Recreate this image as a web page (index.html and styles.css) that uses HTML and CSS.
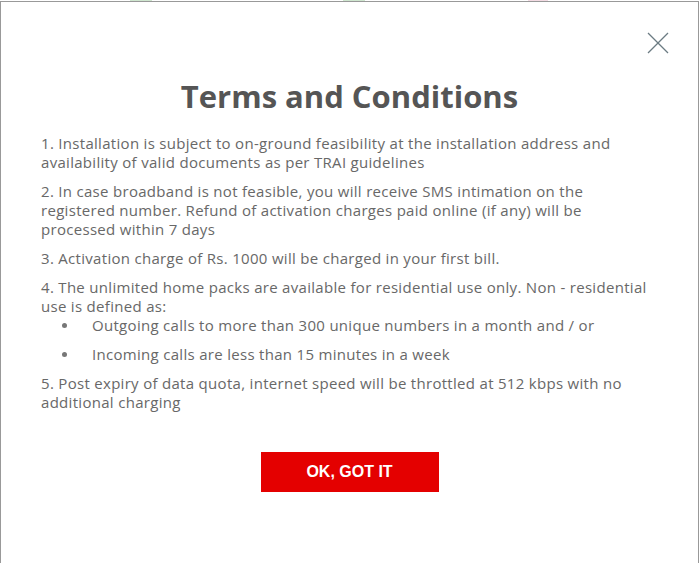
FILE: index.html
```html
<!DOCTYPE html>
<html>
<head>
    <meta charset="utf-8">
    <title>Terms and Conditions</title>
    <link rel="stylesheet" href="styles.css">
</head>
<body>

<div class="backdrop">
    <span class="peek peek-green peek-1"></span>
    <span class="peek peek-green peek-2"></span>
    <span class="peek peek-pink peek-3"></span>
</div>

<div class="modal">
    <div class="close-row">
        <button class="close" aria-label="Close">
            <svg width="22" height="22" viewBox="0 0 22 22">
                <line x1="1" y1="1" x2="21" y2="21" stroke="#6b7b83" stroke-width="1.2"/>
                <line x1="21" y1="1" x2="1" y2="21" stroke="#6b7b83" stroke-width="1.2"/>
            </svg>
        </button>
    </div>
    <h2>Terms and Conditions</h2>
    <div class="terms">
        <div class="term">1. Installation is subject to on-ground feasibility at the installation address and availability of valid documents as per TRAI guidelines</div>
        <div class="term">2. In case broadband is not feasible, you will receive SMS intimation on the registered number. Refund of activation charges paid online (if any) will be processed within 7 days</div>
        <div class="term">3. Activation charge of Rs. 1000 will be charged in your first bill.</div>
        <div class="term">
            4. The unlimited home packs are available for residential use only. Non - residential use is defined as:
            <ul>
                <li>Outgoing calls to more than 300 unique numbers in a month and / or</li>
                <li>Incoming calls are less than 15 minutes in a week</li>
            </ul>
        </div>
        <div class="term">5. Post expiry of data quota, internet speed will be throttled at 512 kbps with no additional charging</div>
    </div>
    <div class="actions">
        <button class="btn">OK, GOT IT</button>
    </div>
</div>

</body>
</html>
```

FILE: styles.css
```css
body {
    margin: 0;
    padding: 0;
    background-color: white;
    font-family: "Open Sans", "Noto Sans", sans-serif;
    height: 100vh;
    overflow: hidden;
}
.backdrop {
    position: relative;
    height: 1px;
}
.peek {
    position: absolute;
    top: 0;
    height: 1px;
}
.peek-green {
    background-color: #cfe6cf;
}
.peek-pink {
    background-color: #f3dbe3;
}
.peek-1 {
    left: 130px;
    width: 22px;
}
.peek-2 {
    left: 343px;
    width: 22px;
}
.peek-3 {
    left: 528px;
    width: 20px;
}
.modal {
    width: 699px;
    height: calc(100vh - 1px);
    box-sizing: border-box;
    border: 1px solid #999;
    border-bottom: none;
    background-color: white;
}
.close-row {
    display: flex;
    justify-content: flex-end;
    padding: 30px 29px 0 0;
}
.close {
    background: none;
    border: none;
    padding: 0;
    width: 22px;
    height: 22px;
    cursor: pointer;
}
.modal h2 {
    margin: 21px 0 17px;
    text-align: center;
    font-size: 31px;
    font-weight: bold;
    color: #555;
}
.terms {
    padding: 0 40px;
    font-size: 15px;
    line-height: 19px;
    letter-spacing: 0.3px;
    color: #686868;
}
.term {
    margin-bottom: 10px;
}
.term ul {
    margin: 0;
    padding: 0 0 0 21px;
    list-style: none;
}
.term li + li {
    margin-top: 10px;
}
.term li::before {
    content: "";
    display: inline-block;
    width: 5px;
    height: 5px;
    border-radius: 50%;
    background-color: #777;
    margin-right: 25px;
    vertical-align: 3px;
}
.actions {
    display: flex;
    justify-content: center;
    margin-top: 40px;
}
.btn {
    width: 178px;
    height: 40px;
    border: none;
    background-color: #e40000;
    color: white;
    font-family: "Liberation Sans", Arial, sans-serif;
    font-size: 16px;
    font-weight: bold;
    cursor: pointer;
}
```
